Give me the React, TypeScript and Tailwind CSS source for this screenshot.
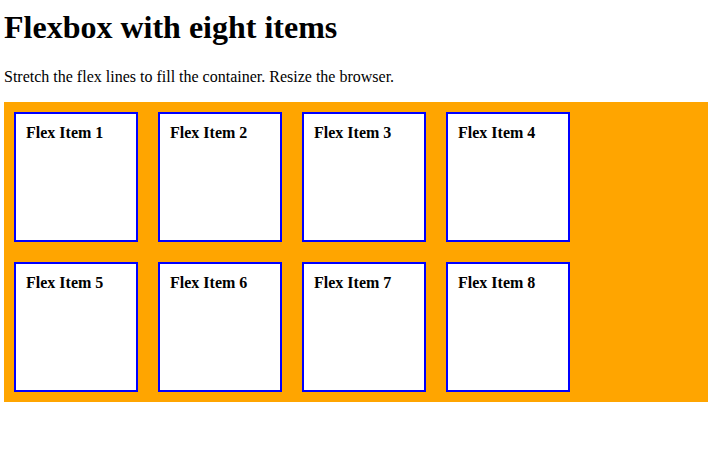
const items = [1, 2, 3, 4, 5, 6, 7, 8];

export default function App() {
  return (
    <div className="min-h-[463px] bg-white p-1 text-black font-['Liberation_Serif',serif]">
      <h1 className="mt-[5px] mb-[22px] text-[32px] font-bold leading-[37px]">Flexbox with eight items</h1>
      <p className="mb-4 text-base leading-[18px]">Stretch the flex lines to fill the container. Resize the browser.</p>

      <div className="flex h-[300px] w-[704px] flex-wrap content-stretch bg-[#ffa500]">
        {items.map(n => (
          <div
            key={n}
            className="m-[10px] h-[130px] w-[124px] border-2 border-[#0000ff] bg-white p-[10px] text-base font-bold leading-[18px]"
          >
            Flex Item {n}
          </div>
        ))}
      </div>
    </div>
  );
}
